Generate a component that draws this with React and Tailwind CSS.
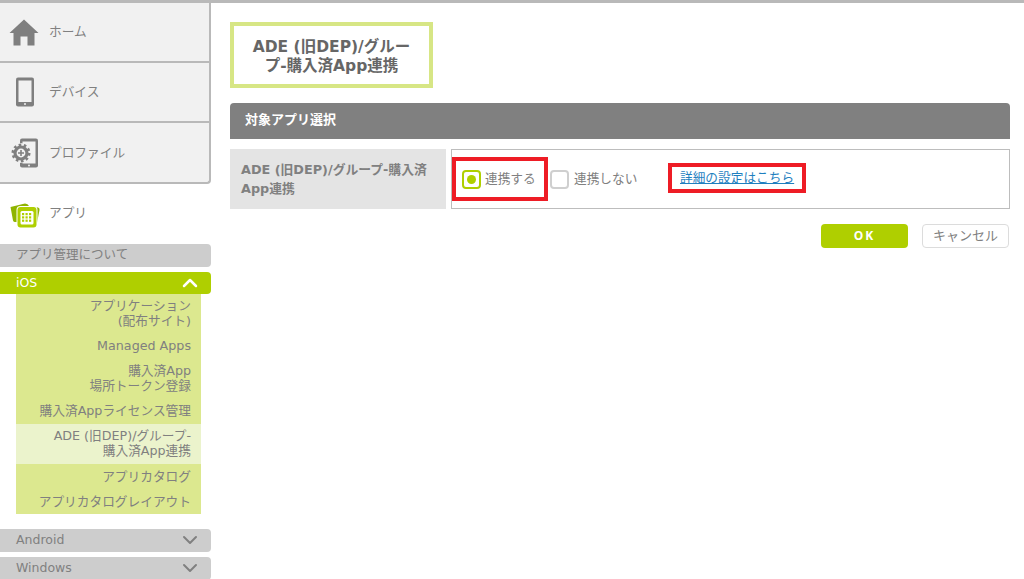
import { ChevronDown, ChevronUp } from 'lucide-react';

const font = { fontFamily: '"DejaVu Sans", "Noto Sans CJK JP", sans-serif' };

function HomeIcon() {
  return (
    <svg width="30" height="27" viewBox="0 0 30 27" className="text-[#7f7f7f] -ml-[2px]">
      <path fill="currentColor" d="M15 0.5 L29.5 14 L25.5 14 L25.5 26.5 L18.5 26.5 L18.5 17.5 L11.5 17.5 L11.5 26.5 L4.5 26.5 L4.5 14 L0.5 14 Z" />
    </svg>
  );
}

function DeviceIcon() {
  return (
    <svg width="20" height="30" viewBox="0 0 20 30">
      <rect x="1" y="0.5" width="18" height="29" rx="2" fill="#7f7f7f" />
      <rect x="3.5" y="3.5" width="13" height="21.5" fill="#f1f1f1" />
      <circle cx="10" cy="27" r="1" fill="#f1f1f1" />
    </svg>
  );
}

function ProfileIcon() {
  return (
    <svg width="28" height="30" viewBox="0 0 28 30">
      <rect x="9" y="0.5" width="18" height="29" rx="2" fill="#7f7f7f" />
      <rect x="11.5" y="3.5" width="13" height="22" fill="#f1f1f1" />
      <circle cx="18" cy="27.5" r="1" fill="#f1f1f1" />
      <circle cx="10" cy="15" r="10" fill="#f1f1f1" />
      <circle cx="10" cy="15" r="6" fill="none" stroke="#7f7f7f" strokeWidth="3.2" />
      <circle cx="10" cy="15" r="8.2" fill="none" stroke="#7f7f7f" strokeWidth="2.6" strokeDasharray="2.6 2.55" />
      <path d="M10 12 V18 M7 15 H13" stroke="#7f7f7f" strokeWidth="1.6" />
    </svg>
  );
}

function AppIcon() {
  return (
    <svg width="30" height="25" viewBox="0 0 30 25" className="-ml-[1px]">
      <path d="M0.5 4 L15 0.5 Q18 0.5 19 3 L28 4.5 Q30 5 29.5 7 L27 20 L5 19 Q3.5 19 3 17.5 Z" fill="#8fb400" />
      <rect x="6.5" y="3" width="21" height="22" rx="4" fill="#fff" />
      <rect x="7.5" y="4" width="19" height="20.5" rx="3" fill="#afcf00" />
      <rect x="10.5" y="8" width="13" height="13.5" rx="1.5" fill="#fff" />
      {[10, 13.3, 16.6].map((y) =>
        [12, 15.5, 19].map((x) => <rect key={`${x}-${y}`} x={x} y={y} width="2.2" height="2.2" fill="#afcf00" />)
      )}
    </svg>
  );
}

function NavItem({ icon, label, last }) {
  return (
    <div className={`flex items-center bg-[#f1f1f1] border-r-2 border-b-2 border-[#b9b9b9] ${last ? 'h-[61px] rounded-br-sm' : 'h-[60px]'}`}>
      <div className="w-[49px] flex justify-center pl-[1px]">{icon}</div>
      <span className="text-[12.7px] text-[#808080]">{label}</span>
    </div>
  );
}

function AccordionBar({ label, className, children }) {
  return (
    <div className={`flex items-center justify-between w-[211px] pl-4 pr-[9px] rounded-r text-[12.5px] ${className}`}>
      <span>{label}</span>
      {children}
    </div>
  );
}

const subItems = [
  { h: 'h-[39px]', lines: ['アプリケーション', '(配布サイト)'] },
  { h: 'h-[25px]', lines: ['Managed Apps'] },
  { h: 'h-[40px]', lines: ['購入済App', '場所トークン登録'] },
  { h: 'h-[26px]', lines: ['購入済Appライセンス管理'] },
  { h: 'h-[40px]', lines: ['ADE (旧DEP)/グループ-', '購入済App連携'], active: true },
  { h: 'h-[25px]', lines: ['アプリカタログ'] },
  { h: 'h-[25px]', lines: ['アプリカタログレイアウト'] },
];

function Sidebar() {
  return (
    <aside className="w-[211px] shrink-0">
      <NavItem icon={<HomeIcon />} label="ホーム" />
      <NavItem icon={<DeviceIcon />} label="デバイス" />
      <NavItem icon={<ProfileIcon />} label="プロファイル" last />
      <div className="h-[60px] flex items-center">
        <div className="w-[49px] flex justify-center pl-[1px] pt-[3px]"><AppIcon /></div>
        <span className="text-[12.7px] text-[#808080] pb-[2px]">アプリ</span>
      </div>
      <AccordionBar label="アプリ管理について" className="h-[23px] bg-[#cdcdcd] text-[#808080]" />
      <AccordionBar label="iOS" className="h-[22px] bg-[#afcf00] text-white mt-[5px]">
        <ChevronUp size={24} strokeWidth={2.5} className="text-white" />
      </AccordionBar>
      <div className="ml-4 w-[185px] bg-[#dce88f] text-[12.7px] leading-[15px] text-[#808080] text-right">
        {subItems.map((item) => (
          <div key={item.lines[0]} className={`${item.h} flex flex-col justify-center pr-[10px] whitespace-nowrap ${item.active ? 'bg-[#ebf3cc] pb-[3px]' : 'pb-[1px]'}`}>
            {item.lines.map((line) => <div key={line}>{line}</div>)}
          </div>
        ))}
      </div>
      <AccordionBar label="Android" className="h-[23px] bg-[#cdcdcd] text-[#808080] mt-[15px] pb-[1px]">
        <ChevronDown size={24} strokeWidth={2} className="text-[#808080]" />
      </AccordionBar>
      <AccordionBar label="Windows" className="h-[23px] bg-[#cdcdcd] text-[#808080] mt-[5px] pb-[1px]">
        <ChevronDown size={24} strokeWidth={2} className="text-[#808080]" />
      </AccordionBar>
    </aside>
  );
}

function Check({ checked }) {
  return (
    <span className={`w-[19px] h-[19px] rounded-[4px] border-2 flex items-center justify-center bg-white ${checked ? 'border-[#afcf00]' : 'border-[#cfcfcf]'}`}>
      {checked && <span className="w-[9px] h-[9px] rounded-full bg-[#afcf00]" />}
    </span>
  );
}

export default function App() {
  return (
    <div className="w-[1024px] h-[579px] overflow-hidden bg-white border-t-[3px] border-[#b9b9b9] flex" style={font}>
      <Sidebar />
      <main className="flex-1 pl-[19px] pr-[14px] pt-[19px] relative">
        <div className="w-[203px] h-[66px] border-4 border-[#d7e685] flex items-center justify-center text-center text-[15.5px] leading-[19px] font-bold text-[#666] pt-[3px]">
          <div className="w-[175px] whitespace-nowrap">ADE (旧DEP)/グルー<br />プ-購入済App連携</div>
        </div>
        <div className="mt-[15px] h-9 bg-[#808080] rounded-t-sm flex items-center pl-[15px] pb-[2px] text-[13px] font-bold text-white">
          対象アプリ選択
        </div>
        <div className="mt-[10px] flex gap-[5px] h-[60px]">
          <div className="w-[216px] bg-[#e4e4e4] flex items-center pl-[11px] text-[12.8px] leading-[19px] font-bold text-[#808080] whitespace-nowrap">
            <div>ADE (旧DEP)/グループ-購入済<br />App連携</div>
          </div>
          <div className="flex-1 border border-[#bdbdbd] flex items-center pl-[10px] text-[12.7px] text-[#808080]">
            <Check checked />
            <span className="ml-[4px] w-[65px]">連携する</span>
            <Check />
            <span className="ml-[5px] w-[100px]">連携しない</span>
            <a className="text-[#1f7fbf] underline -mt-[3px] ml-[6px]">詳細の設定はこちら</a>
          </div>
        </div>
        <div className="mt-[15px] flex justify-end gap-[14px] pr-[1px]">
          <button className="w-[87px] h-6 rounded-sm bg-[#afcf00] text-white text-[12px] font-['Open_Sans'] font-bold tracking-[2px]">OK</button>
          <button className="w-[87px] h-6 rounded-sm border border-[#dcdcdc] bg-white text-[#808080] text-[13px]">キャンセル</button>
        </div>
        {/* annotation boxes drawn over the screenshot */}
        <div className="absolute left-[241px] top-[154px] w-[96px] h-11 border-4 border-[#ee1c25]" />
        <div className="absolute left-[457px] top-[160px] w-[138px] h-[30px] border-4 border-[#ee1c25]" />
      </main>
    </div>
  );
}
